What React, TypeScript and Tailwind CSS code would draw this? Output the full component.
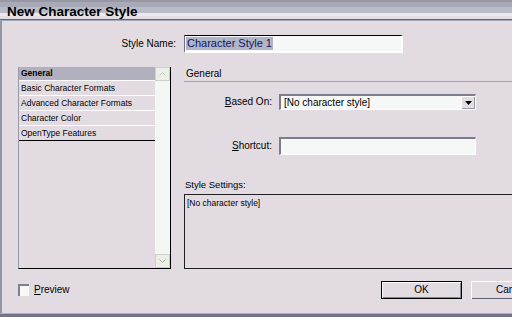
export default function App() {
  const sections = [
    'Basic Character Formats',
    'Advanced Character Formats',
    'Character Color',
    'OpenType Features',
  ]

  return (
    <div className="w-[512px] h-[317px] overflow-hidden bg-[#e2dce2] flex flex-col text-black font-['Liberation_Sans',Arial,sans-serif]">
      {/* Title bar */}
      <div className="h-[19px] shrink-0 pl-[7px] pt-[5px] bg-[linear-gradient(to_bottom,#9898a4_0,#9898a4_2px,#a8aab8_2px,#a8aab8_7px,#b8bcc8_7px,#b8bcc8_13px,#ece8ec_13px,#ece8ec_16px,#e4dee4_16px)]">
        <span className="block text-[13.5px] leading-[13px] font-bold whitespace-nowrap">New Character Style</span>
      </div>
      <div className="h-px shrink-0 bg-[#5c6478]" />
      <div className="h-px shrink-0 bg-[#a4acbc]" />

      {/* Body */}
      <div className="h-[292px] shrink-0 border-l-2 border-[#9494a2] flex flex-col">
        {/* Style name */}
        <div className="mt-[14px] h-[18px] flex items-center">
          <div className="w-[174px] text-right text-[10px] leading-none">Style Name:</div>
          <div className="ml-[8px] w-[219px] h-[18px] bg-[#f6f8f8] border-t border-l border-t-black border-l-[#707080] border-r-2 border-b-2 border-r-white border-b-white flex items-center pl-[1px]">
            <span className="bg-[#b0b4c8] text-[#14145a] text-[11px] leading-[13px] px-px whitespace-nowrap">Character Style 1</span>
          </div>
        </div>

        {/* Main area */}
        <div className="mt-[14px] h-[202px] flex">
          {/* Section list */}
          <div className="ml-[16px] w-[153px] h-[202px] border-l border-l-[#9898a6] border-r border-r-black border-b border-b-black flex shrink-0">
            <div className="flex-1 flex flex-col">
              <div className="h-[14px] border-b border-white bg-[#b0b0be] pl-[2px] flex items-center text-[8.5px] font-bold leading-none">General</div>
              {sections.map((s, i) => (
                <div
                  key={s}
                  className={`h-[15px] pl-[2px] flex items-center text-[8.5px] leading-none whitespace-nowrap border-b ${i === sections.length - 1 ? 'border-black' : 'border-white'}`}
                >
                  {s}
                </div>
              ))}
            </div>
            <div className="w-[15px] bg-[#f4f6f6] flex flex-col justify-between">
              <div className="h-[14px] border border-[#d0d0c8] bg-[#eceee8] flex items-center justify-center">
                <svg width="7" height="4" viewBox="0 0 7 4"><path d="M0.5 3.5 L3.5 0.5 L6.5 3.5" stroke="#c4c4bc" fill="none" /></svg>
              </div>
              <div className="h-[14px] border border-[#d0d0c8] bg-[#eceee8] flex items-center justify-center">
                <svg width="7" height="4" viewBox="0 0 7 4"><path d="M0.5 0.5 L3.5 3.5 L6.5 0.5" stroke="#a8b09c" fill="none" /></svg>
              </div>
            </div>
          </div>

          {/* Right panel */}
          <div className="ml-[13px] w-[340px] shrink-0 flex flex-col">
            <div className="h-[15px] border-b border-[#a0a0aa] pl-[2px] text-[10px] leading-[13px]">General</div>

            <div className="mt-[12px] h-[16px] flex items-center">
              <div className="w-[88px] text-right text-[10px] leading-none"><span className="underline">B</span>ased On:</div>
              <div className="ml-[7px] w-[197px] h-[16px] bg-[#f6f8f8] border-t-2 border-l-2 border-r border-b border-t-[#7c7c8a] border-l-[#7c7c8a] border-r-white border-b-white flex items-center">
                <span className="flex-1 pl-[3px] text-[10px] leading-none whitespace-nowrap">[No character style]</span>
                <div className="w-[14px] h-[13px] bg-[#e4dee4] shadow-[inset_1px_1px_0_#ffffff,inset_-1px_-1px_0_#9a9aa6] flex items-center justify-center">
                  <svg width="7" height="4" viewBox="0 0 7 4"><path d="M0 0 H7 L3.5 4 Z" fill="#000" /></svg>
                </div>
              </div>
            </div>

            <div className="mt-[27px] h-[18px] flex items-center">
              <div className="w-[88px] text-right text-[10px] leading-none"><span className="underline">S</span>hortcut:</div>
              <div className="ml-[7px] w-[197px] h-[18px] bg-[#f6f8f8] border-t-2 border-l-2 border-r border-b border-t-[#7c7c8a] border-l-[#7c7c8a] border-r-white border-b-white" />
            </div>

            <div className="mt-[24px] h-[12px] pl-px text-[9.5px] leading-[12px]">Style Settings:</div>
            <div className="mt-[3px] h-[75px] border border-[#202020] pl-[2px] pt-[3px] text-[8.5px] leading-[11px]">[No character style]</div>
          </div>
        </div>

        {/* Bottom row */}
        <div className="mt-[12px] h-[18px] flex items-center">
          <div className="ml-[16px] w-[363px] shrink-0 flex items-center">
            <div className="w-[11px] h-[12px] bg-[#f8f8f8] border-t-2 border-l-2 border-[#80808e]" />
            <span className="ml-[5px] text-[10px] leading-none"><span className="underline">P</span>review</span>
          </div>
          <button className="w-[81px] h-[18px] shrink-0 border border-black bg-[#e2dce2] shadow-[inset_1px_1px_0_#ffffff,inset_-1px_-1px_0_#888894] text-[10px] leading-none">OK</button>
          <button className="ml-[9px] w-[81px] h-[18px] shrink-0 bg-[#e2dce2] shadow-[inset_1px_1px_0_#ffffff,inset_-1px_-1px_0_#606070] text-[10px] leading-none">Cancel</button>
        </div>
      </div>

      <div className="h-px shrink-0 bg-[#b0b0bc]" />
      <div className="h-[3px] shrink-0 bg-[#72728a]" />
    </div>
  )
}
